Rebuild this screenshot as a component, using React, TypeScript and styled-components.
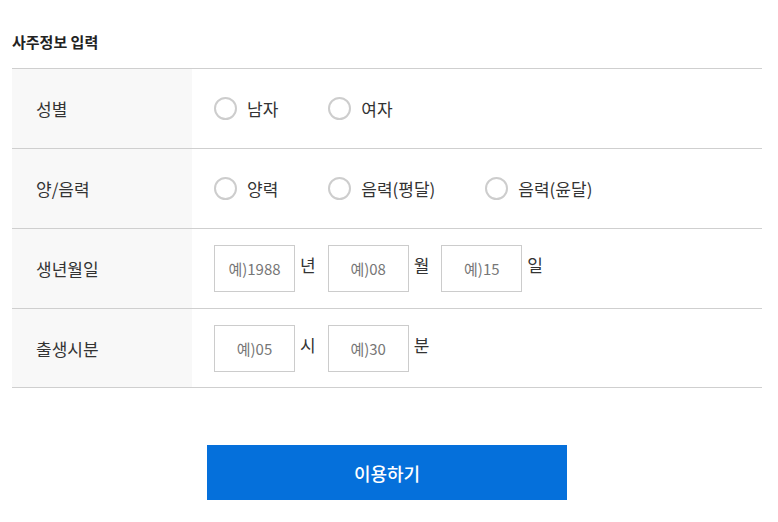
import styled, { createGlobalStyle } from "styled-components";

const GlobalStyle = createGlobalStyle`
  html, body {
    margin: 0;
    padding: 0;
    background: #fff;
    font-family: "Noto Sans CJK KR", "Noto Sans", sans-serif;
    color: #333;
  }
  * { box-sizing: border-box; }
`;

const Page = styled.div`
  padding: 32px 16px 0 12px;
`;

const Title = styled.h2`
  margin: 0 0 16px;
  font-size: 15px;
  font-weight: 700;
  line-height: 20px;
  color: #222;
`;

const Table = styled.div`
  border-top: 1px solid #cfcfcf;
`;

const Row = styled.div`
  display: flex;
  height: 80px;
  border-bottom: 1px solid #cfcfcf;
  &:last-child {
    height: 79px;
  }
`;

const Head = styled.div`
  width: 180px;
  flex-shrink: 0;
  background: #f8f8f8;
  display: flex;
  align-items: center;
  padding-left: 24px;
  font-size: 17px;
  color: #333;
`;

const Cell = styled.div`
  flex: 1;
  display: flex;
  align-items: center;
  padding-left: 22px;
`;

const Option = styled.label`
  display: flex;
  align-items: center;
  margin-right: 50px;
  font-size: 17px;
  color: #333;
  cursor: pointer;
`;

const Circle = styled.span`
  width: 23px;
  height: 23px;
  border: 2px solid #cdcdcd;
  border-radius: 50%;
  margin-right: 10px;
  background: #fff;
`;

const Field = styled.input`
  width: 81px;
  height: 47px;
  border: 1px solid #cccccc;
  text-align: center;
  font-family: inherit;
  font-size: 15px;
  color: #333;
  outline: none;
  padding: 0;
  &::placeholder {
    color: #777;
  }
`;

const Unit = styled.span`
  font-size: 17px;
  color: #333;
  margin: 0 12px 8px 5px;
  align-self: center;
`;

const Footer = styled.div`
  display: flex;
  justify-content: center;
  padding-top: 57px;
`;

const Submit = styled.button`
  width: 360px;
  height: 55px;
  border: none;
  background: #0570db;
  color: #fff;
  font-family: inherit;
  font-size: 18px;
  font-weight: 500;
  cursor: pointer;
`;

function Radio({ label }: { label: string }) {
  return (
    <Option>
      <Circle />
      {label}
    </Option>
  );
}

export default function App() {
  return (
    <Page>
      <GlobalStyle />
      <Title>사주정보 입력</Title>
      <Table>
        <Row>
          <Head>성별</Head>
          <Cell>
            <Radio label="남자" />
            <Radio label="여자" />
          </Cell>
        </Row>
        <Row>
          <Head>양/음력</Head>
          <Cell>
            <Radio label="양력" />
            <Radio label="음력(평달)" />
            <Radio label="음력(윤달)" />
          </Cell>
        </Row>
        <Row>
          <Head>생년월일</Head>
          <Cell>
            <Field placeholder="예)1988" />
            <Unit>년</Unit>
            <Field placeholder="예)08" />
            <Unit>월</Unit>
            <Field placeholder="예)15" />
            <Unit>일</Unit>
          </Cell>
        </Row>
        <Row>
          <Head>출생시분</Head>
          <Cell>
            <Field placeholder="예)05" />
            <Unit>시</Unit>
            <Field placeholder="예)30" />
            <Unit>분</Unit>
          </Cell>
        </Row>
      </Table>
      <Footer>
        <Submit>이용하기</Submit>
      </Footer>
    </Page>
  );
}
